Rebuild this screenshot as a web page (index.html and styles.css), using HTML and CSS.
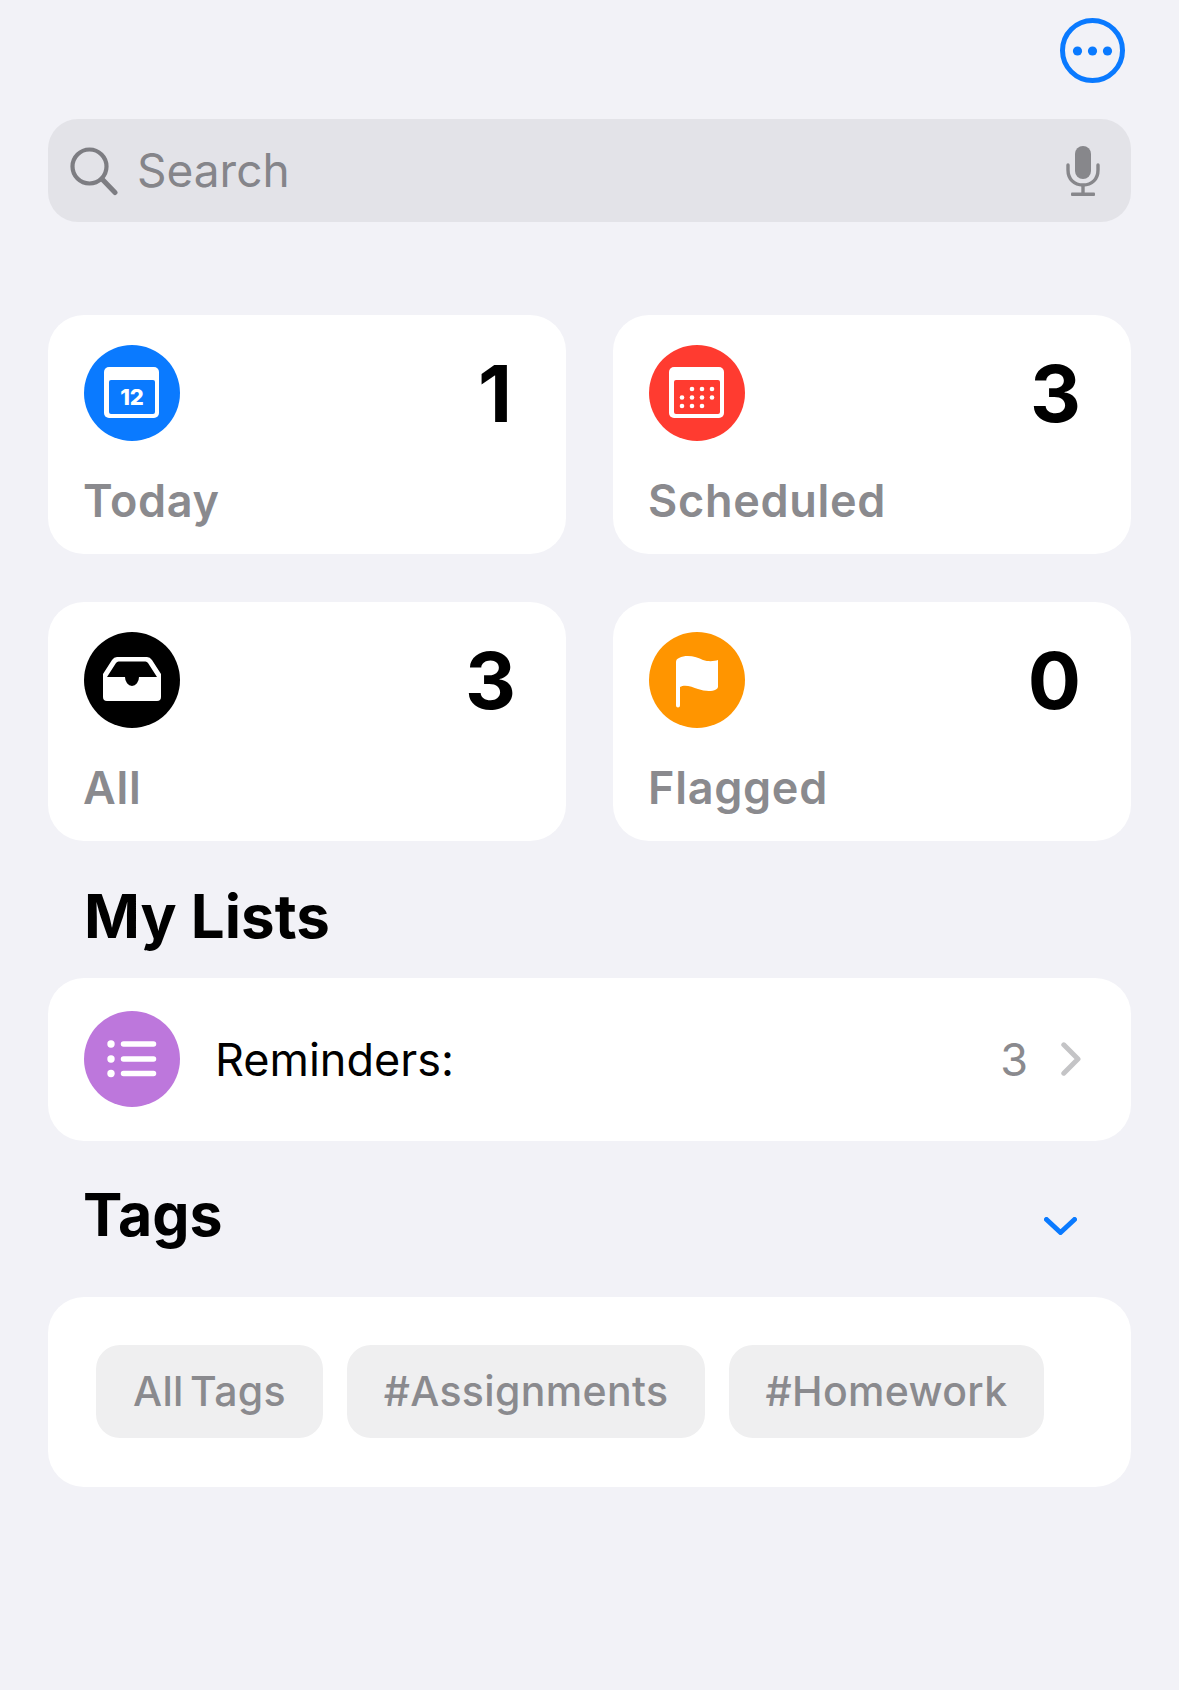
FILE: index.html
```html
<!DOCTYPE html>
<html>

<head>
    <meta charset='utf-8'>
    <title>Reminders</title>
    <meta name='viewport' content='width=device-width, initial-scale=1'>
    <link rel="stylesheet" href="styles.css">
</head>

<body>
    <div id="main">
        <header class="top_bar">
            <svg class="more_icon" viewBox="0 0 65 65">
                <circle cx="32.5" cy="32.5" r="30" fill="none" stroke="#0a7aff" stroke-width="5"/>
                <circle cx="17.5" cy="33" r="4.6" fill="#0a7aff"/>
                <circle cx="32.5" cy="33" r="4.6" fill="#0a7aff"/>
                <circle cx="47.5" cy="33" r="4.6" fill="#0a7aff"/>
            </svg>
        </header>

        <div class="search">
            <svg class="search_icon" viewBox="0 0 48 54">
                <circle cx="19.5" cy="20.5" r="17" fill="none" stroke="#7d7d82" stroke-width="4.2"/>
                <path d="M32 33 L45 46.5" fill="none" stroke="#7d7d82" stroke-width="5" stroke-linecap="round"/>
            </svg>
            <span class="search_text">Search</span>
            <svg class="mic_icon" viewBox="0 0 34 50">
                <rect x="9" y="0" width="16" height="33" rx="8" fill="#87878b"/>
                <path d="M2 19 V24 C2 33 8 39 17 39 C26 39 32 33 32 24 V19" fill="none" stroke="#87878b" stroke-width="3.4" stroke-linecap="round"/>
                <path d="M17 39 V47" stroke="#87878b" stroke-width="3.4"/>
                <rect x="5" y="46.6" width="24" height="3.4" rx="1" fill="#87878b"/>
            </svg>
        </div>

        <section class="smart_grid">
            <div class="card smart">
                <div class="smart_top">
                    <svg class="round_icon" viewBox="0 0 96 96">
                        <circle cx="48" cy="48" r="48" fill="#0a7aff"/>
                        <rect x="20" y="22" width="55" height="51" rx="5" fill="#fff"/>
                        <rect x="25" y="35" width="46" height="34" rx="2" fill="#0a7aff"/>
                        <text x="48" y="60" class="icon_date">12</text>
                    </svg>
                    <span class="count count_one">1</span>
                </div>
                <div class="smart_label">Today</div>
            </div>
            <div class="card smart">
                <div class="smart_top">
                    <svg class="round_icon" viewBox="0 0 96 96">
                        <circle cx="48" cy="48" r="48" fill="#ff3b30"/>
                        <rect x="20" y="22" width="55" height="51" rx="5" fill="#fff"/>
                        <rect x="25" y="35" width="46" height="34" rx="2" fill="#ff3b30"/>
                        <g fill="#fff">
                            <circle cx="43" cy="44" r="2.3"/>
                            <circle cx="53" cy="44" r="2.3"/>
                            <circle cx="63" cy="44" r="2.3"/>
                            <circle cx="33" cy="52.500" r="2.3"/>
                            <circle cx="43" cy="52.500" r="2.3"/>
                            <circle cx="53" cy="52.500" r="2.3"/>
                            <circle cx="63" cy="52.500" r="2.3"/>
                            <circle cx="33" cy="61" r="2.3"/>
                            <circle cx="43" cy="61" r="2.3"/>
                            <circle cx="53" cy="61" r="2.3"/>
                        </g>
                    </svg>
                    <span class="count">3</span>
                </div>
                <div class="smart_label">Scheduled</div>
            </div>
            <div class="card smart">
                <div class="smart_top">
                    <svg class="round_icon" viewBox="0 0 96 96">
                        <circle cx="48" cy="48" r="48" fill="#000"/>
                        <path fill="#fff" fill-rule="evenodd" d="M33 25 H63 Q66 25 68 28 L77 42 V65 Q77 69 73 69 H23 Q19 69 19 65 V42 L28 28 Q30 25 33 25 Z M34.500 29.500 Q33 29.500 32 31 L23 45 H41 A7 9 0 0 0 55 45 H73 L64 31 Q63 29.500 61.500 29.500 Z"/>
                    </svg>
                    <span class="count">3</span>
                </div>
                <div class="smart_label">All</div>
            </div>
            <div class="card smart">
                <div class="smart_top">
                    <svg class="round_icon" viewBox="0 0 96 96">
                        <circle cx="48" cy="48" r="48" fill="#ff9500"/>
                        <path fill="#fff" d="M27 30 Q27 27 30 26 C38 22 48 25 54 28 C60 30 66 29 69 28 V55 Q69 56 67 57.500 C62 60 55 59 49 57 C43 55 36 52 31 55 V73.500 A2 2 0 0 1 27 73.500 Z"/>
                    </svg>
                    <span class="count">0</span>
                </div>
                <div class="smart_label">Flagged</div>
            </div>
        </section>

        <h2 class="section_title lists_title">My Lists</h2>

        <div class="card list_row">
            <svg class="round_icon list_icon" viewBox="0 0 96 96">
                <circle cx="48" cy="48" r="48" fill="#bd77dc"/>
                <g fill="#fff">
                    <circle cx="27" cy="33" r="3.700"/>
                    <circle cx="27" cy="48" r="3.700"/>
                    <circle cx="27" cy="62.500" r="3.700"/>
                </g>
                <path d="M39.500 33 H69.500 M39.500 48 H69.500 M39.500 62.500 H69.500" stroke="#fff" stroke-width="5.500" stroke-linecap="round"/>
            </svg>
            <span class="list_name">Reminders:</span>
            <span class="list_count">3</span>
            <svg class="chevron_right" viewBox="0 0 20 34">
                <path d="M2.800 2.800 L17 17 L2.800 31.200" fill="none" stroke="#c4c4c6" stroke-width="5" stroke-linecap="round" stroke-linejoin="round"/>
            </svg>
        </div>

        <div class="tags_head">
            <h2 class="section_title tags_title">Tags</h2>
            <svg class="chevron_down" viewBox="0 0 33 18">
                <path d="M2.500 2.500 L16.500 15.500 L30.500 2.500" fill="none" stroke="#0a7aff" stroke-width="5" stroke-linecap="round" stroke-linejoin="round"/>
            </svg>
        </div>

        <div class="card tags">
            <span class="chip">All Tags</span>
            <span class="chip">#Assignments</span>
            <span class="chip">#Homework</span>
        </div>
    </div>
</body>

</html>
```

FILE: styles.css
```css
* {
    box-sizing: border-box;
}

html,
body {
    margin: 0;
    padding: 0;
    height: 100%;
    width: 100%;
}

body {
    background-color: #f2f2f7;
    font-family: Inter, "Liberation Sans", sans-serif;
    color: #000;
}

#main {
    padding: 0 48px;
    min-height: 1690px;
}

.top_bar {
    height: 119px;
    display: flex;
    justify-content: flex-end;
    align-items: flex-start;
    padding-top: 18px;
    padding-right: 6px;
}

.more_icon {
    width: 65px;
    height: 65px;
}

.search {
    height: 103px;
    display: flex;
    align-items: center;
    background-color: #e3e3e8;
    border-radius: 30px;
    padding: 0 31px 0 22px;
    margin-bottom: 93px;
}

.search_icon {
    width: 48px;
    height: 54px;
    margin-top: 4px;
}

.search_text {
    flex: 1 1 0;
    margin-left: 19px;
    margin-bottom: 2px;
    font-size: 46px;
    color: #85858a;
}

.mic_icon {
    width: 34px;
    height: 50px;
}

.card {
    background-color: #fff;
}

.smart_grid {
    display: grid;
    grid-template-columns: 518px 518px;
    grid-template-rows: 239px 239px;
    column-gap: 47px;
    row-gap: 48px;
}

.smart {
    border-radius: 36px;
    padding: 30px 50px 0 36px;
}

.smart_top {
    display: flex;
    justify-content: space-between;
    align-items: center;
    height: 96px;
}

.round_icon {
    width: 96px;
    height: 96px;
    flex: 0 0 96px;
}

.count {
    font-size: 79px;
    font-weight: 700;
    line-height: 96px;
}

/* the 1 sits tighter in the font used here */
.count_one {
    margin-right: 4px;
}

.smart_label {
    margin-top: 31px;
    margin-left: -1px;
    font-size: 45px;
    font-weight: 600;
    line-height: 57px;
    letter-spacing: 0.7px;
    color: #8a8a8e;
}

.section_title {
    margin: 0;
    font-size: 60px;
    font-weight: 700;
    line-height: 70px;
}

.lists_title {
    padding: 40px 0 27px 36px;
}

.tags_title {
    font-size: 59px;
    margin-left: -1px;
}

.list_row {
    height: 163px;
    border-radius: 36px;
    display: flex;
    align-items: center;
    padding: 0 50px 0 36px;
}

.list_icon {
    margin-top: -1px;
}

.list_name {
    flex: 1 1 0;
    margin-left: 35px;
    font-size: 45px;
}

.list_count {
    font-size: 45px;
    color: #8a8a8e;
    margin-right: 33px;
}

.chevron_right {
    width: 20px;
    height: 34px;
    margin-top: -1px;
}

.tags_head {
    height: 156px;
    display: flex;
    justify-content: space-between;
    align-items: flex-start;
    padding: 39px 54px 0 36px;
}

.chevron_down {
    width: 33px;
    height: 18px;
    margin-top: 37px;
}

.tags {
    height: 190px;
    border-radius: 36px;
    display: grid;
    grid-template-columns: 227px 358px 315px;
    grid-template-rows: 93px;
    column-gap: 24px;
    padding: 48px;
}

.chip {
    border-radius: 24px;
    background-color: #efeff0;
    color: #8a8a8e;
    font-size: 41px;
    font-weight: 500;
    line-height: 93px;
    text-align: center;
    letter-spacing: 0.35px;
    word-spacing: -5px;
}

.icon_date {
    font-family: Inter, sans-serif;
    font-size: 22px;
    font-weight: 800;
    fill: #fff;
    text-anchor: middle;
}
```
